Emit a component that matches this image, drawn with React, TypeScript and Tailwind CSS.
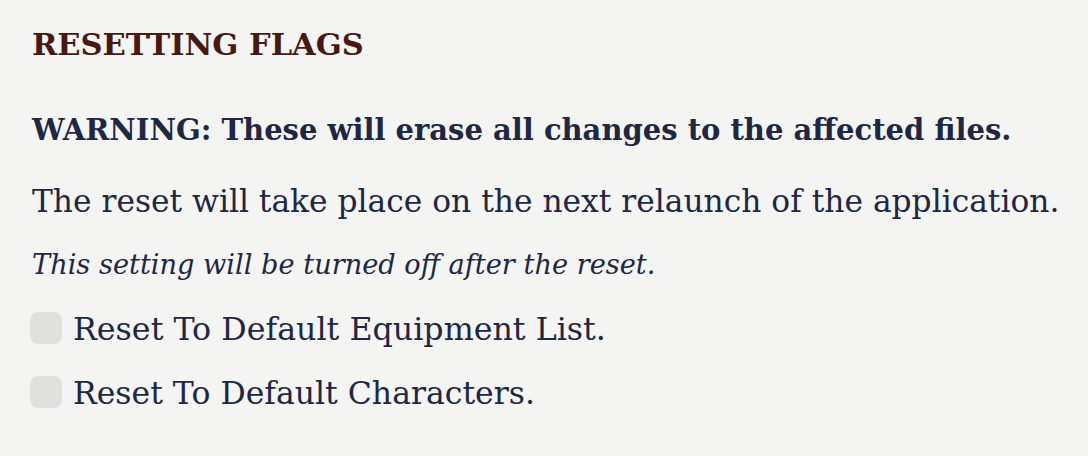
import React from "react";

export default function App() {
  const serif = { fontFamily: '"DejaVu Serif", serif' } as React.CSSProperties;
  return (
    <div className="min-h-[456px] w-[1088px] bg-[#f4f4f2] pl-[32px] pt-[24px] text-[#1e2743]" style={serif}>
      <h2 className="text-[30.5px] leading-[40px] font-bold text-[#461912]">RESETTING FLAGS</h2>
      <div className="mt-[46px] flex flex-col">
        <p className="text-[29px] leading-[40px] font-bold">WARNING: These will erase all changes to the affected files.</p>
        <p className="mt-[31px] text-[31.3px] leading-[40px]">The reset will take place on the next relaunch of the application.</p>
        <p className="mt-[24px] text-[27.2px] leading-[40px] italic">This setting will be turned off after the reset.</p>
        <label className="mt-[24px] flex items-start text-[31.7px] leading-[40px]">
          <span className="ml-[-2px] mr-[11px] mt-[3px] h-[32px] w-[32px] shrink-0 rounded-[8px] bg-[#dfdfde]" />
          Reset To Default Equipment List.
        </label>
        <label className="mt-[24px] flex items-start text-[31.5px] leading-[40px]">
          <span className="ml-[-2px] mr-[11px] mt-[3px] h-[32px] w-[32px] shrink-0 rounded-[8px] bg-[#dfdfde]" />
          Reset To Default Characters.
        </label>
      </div>
    </div>
  );
}
